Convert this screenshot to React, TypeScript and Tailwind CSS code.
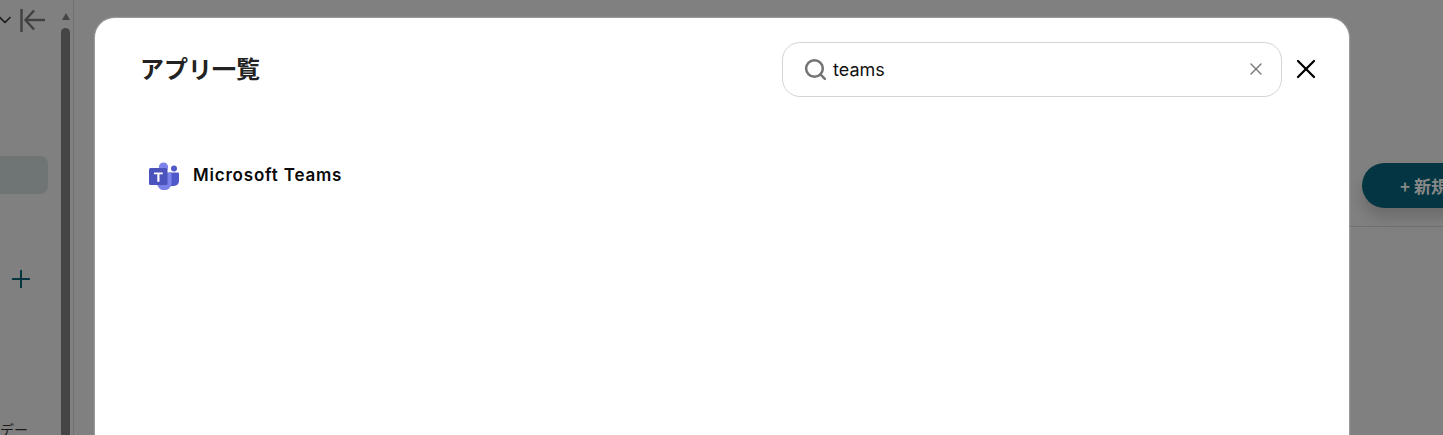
import { Search, X, Plus, ChevronDown } from "lucide-react";

const jpFont = "font-['Inter','Noto_Sans_CJK_JP',sans-serif]";

function TeamsIcon() {
  return (
    <svg width="30" height="28" viewBox="0 0 30 28" className="shrink-0">
      <circle cx="25" cy="6.5" r="3" fill="#5059c9" />
      <path d="M20 10.5h9a1 1 0 0 1 1 1v7.5a5 5 0 0 1-5 5h-5z" fill="#5059c9" />
      <circle cx="14.5" cy="5" r="4.6" fill="#7b83eb" />
      <path d="M8 10.5h13.5a1 1 0 0 1 1 1v9a7 7 0 0 1-14.500 1z" fill="#7b83eb" />
      <rect x="0" y="6" width="18.500" height="17" rx="1.500" fill="#4b53bc" />
      <path d="M13.800 10.500H5v1.800h3.300v7.500h2.200v-7.500h3.300z" fill="#fff" />
    </svg>
  );
}

function CollapseIcon() {
  return (
    <svg width="26" height="26" viewBox="0 0 26 26" fill="none" stroke="#404040" strokeWidth="2.4" className="shrink-0 ml-[5px]">
      <path d="M1.500 2v23" />
      <path d="M14 3.500 5.500 13l8.500 9.500" />
      <path d="M5.500 13H25" />
    </svg>
  );
}

function Sidebar() {
  return (
    <aside className="flex h-full w-[74px] shrink-0 border-r border-[#707070] overflow-hidden">
      <div className="flex-1 min-w-0 flex flex-col">
        <div className="flex items-center h-[40px] shrink-0 -ml-[5px]">
          <ChevronDown className="w-[20px] h-[20px] text-[#1c1c1c] shrink-0" strokeWidth={2} />
          <CollapseIcon />
        </div>
        <div className="mt-[116px] h-[38px] shrink-0 -ml-4 mr-[11px] rounded-lg bg-[#6f7474]" />
        <div className="mt-[71px] ml-[7px] shrink-0">
          <Plus className="w-[28px] h-[28px] text-[#03343f]" strokeWidth={1.7} />
        </div>
        <div className="mt-[126px] shrink-0 whitespace-nowrap text-[14px] leading-5 text-[#1a1a1a] font-['Noto_Sans_CJK_JP',sans-serif]">
          デー
        </div>
      </div>
      <div className="w-[13px] shrink-0 flex flex-col items-center pt-[13px] mr-[1px]">
        <div className="w-0 h-0 border-x-[4.500px] border-x-transparent border-b-[7px] border-b-[#454545]" />
        <div className="mt-[8px] w-[9px] flex-1 rounded-t-full bg-[#454545]" />
      </div>
    </aside>
  );
}

function Main() {
  return (
    <main className="flex-1 min-w-0 overflow-hidden">
      <div className="h-[226px] flex items-start justify-end pt-[163px] -mr-[60px]">
        <button className="h-[45px] w-[141px] rounded-full bg-[#033642] shadow-[0_10px_14px_rgba(0,0,0,0.16)] pl-[38px] text-left text-[17px] font-bold text-[#888888] whitespace-nowrap font-['Noto_Sans_CJK_JP',sans-serif]">
          + 新規
        </button>
      </div>
      <div className="ml-[21px] border-t border-[#707070]" />
    </main>
  );
}

function AppListModal() {
  return (
    <div className="absolute left-[95px] top-[18px] w-[1254px] h-[500px] rounded-t-[20px] bg-white shadow-[0_0_2px_rgba(255,255,255,0.8)]">
      <div className="flex items-center h-[102px] pl-[45px] pr-[27px]">
        <h2 className={`flex-1 pt-[2px] text-[24px] font-bold text-[#222222] ${jpFont}`}>アプリ一覧</h2>
        <div className="flex items-center w-[500px] h-[55px] mr-[8px] rounded-[18px] border border-[#d4d4d4] pl-[20px] pr-[15px]">
          <Search className="w-[25px] h-[25px] text-[#737373] shrink-0" strokeWidth={2.4} />
          <span className="flex-1 ml-[5px] text-[18px] text-[#111111] font-['Inter',sans-serif]">teams</span>
          <X className="w-[20px] h-[20px] text-[#777777]" strokeWidth={1.6} />
        </div>
        <X className="w-[32px] h-[32px] text-black shrink-0" strokeWidth={1.7} />
      </div>
      <div className="flex items-center gap-[14px] mt-[42px] ml-[54px]">
        <TeamsIcon />
        <span className="text-[17px] font-semibold tracking-[0.8px] text-[#0a0a0a] font-['Inter',sans-serif]">Microsoft Teams</span>
      </div>
    </div>
  );
}

export default function App() {
  return (
    <div className="relative flex h-[435px] w-[1443px] overflow-hidden bg-[#808080]">
      <Sidebar />
      <Main />
      <AppListModal />
    </div>
  );
}
